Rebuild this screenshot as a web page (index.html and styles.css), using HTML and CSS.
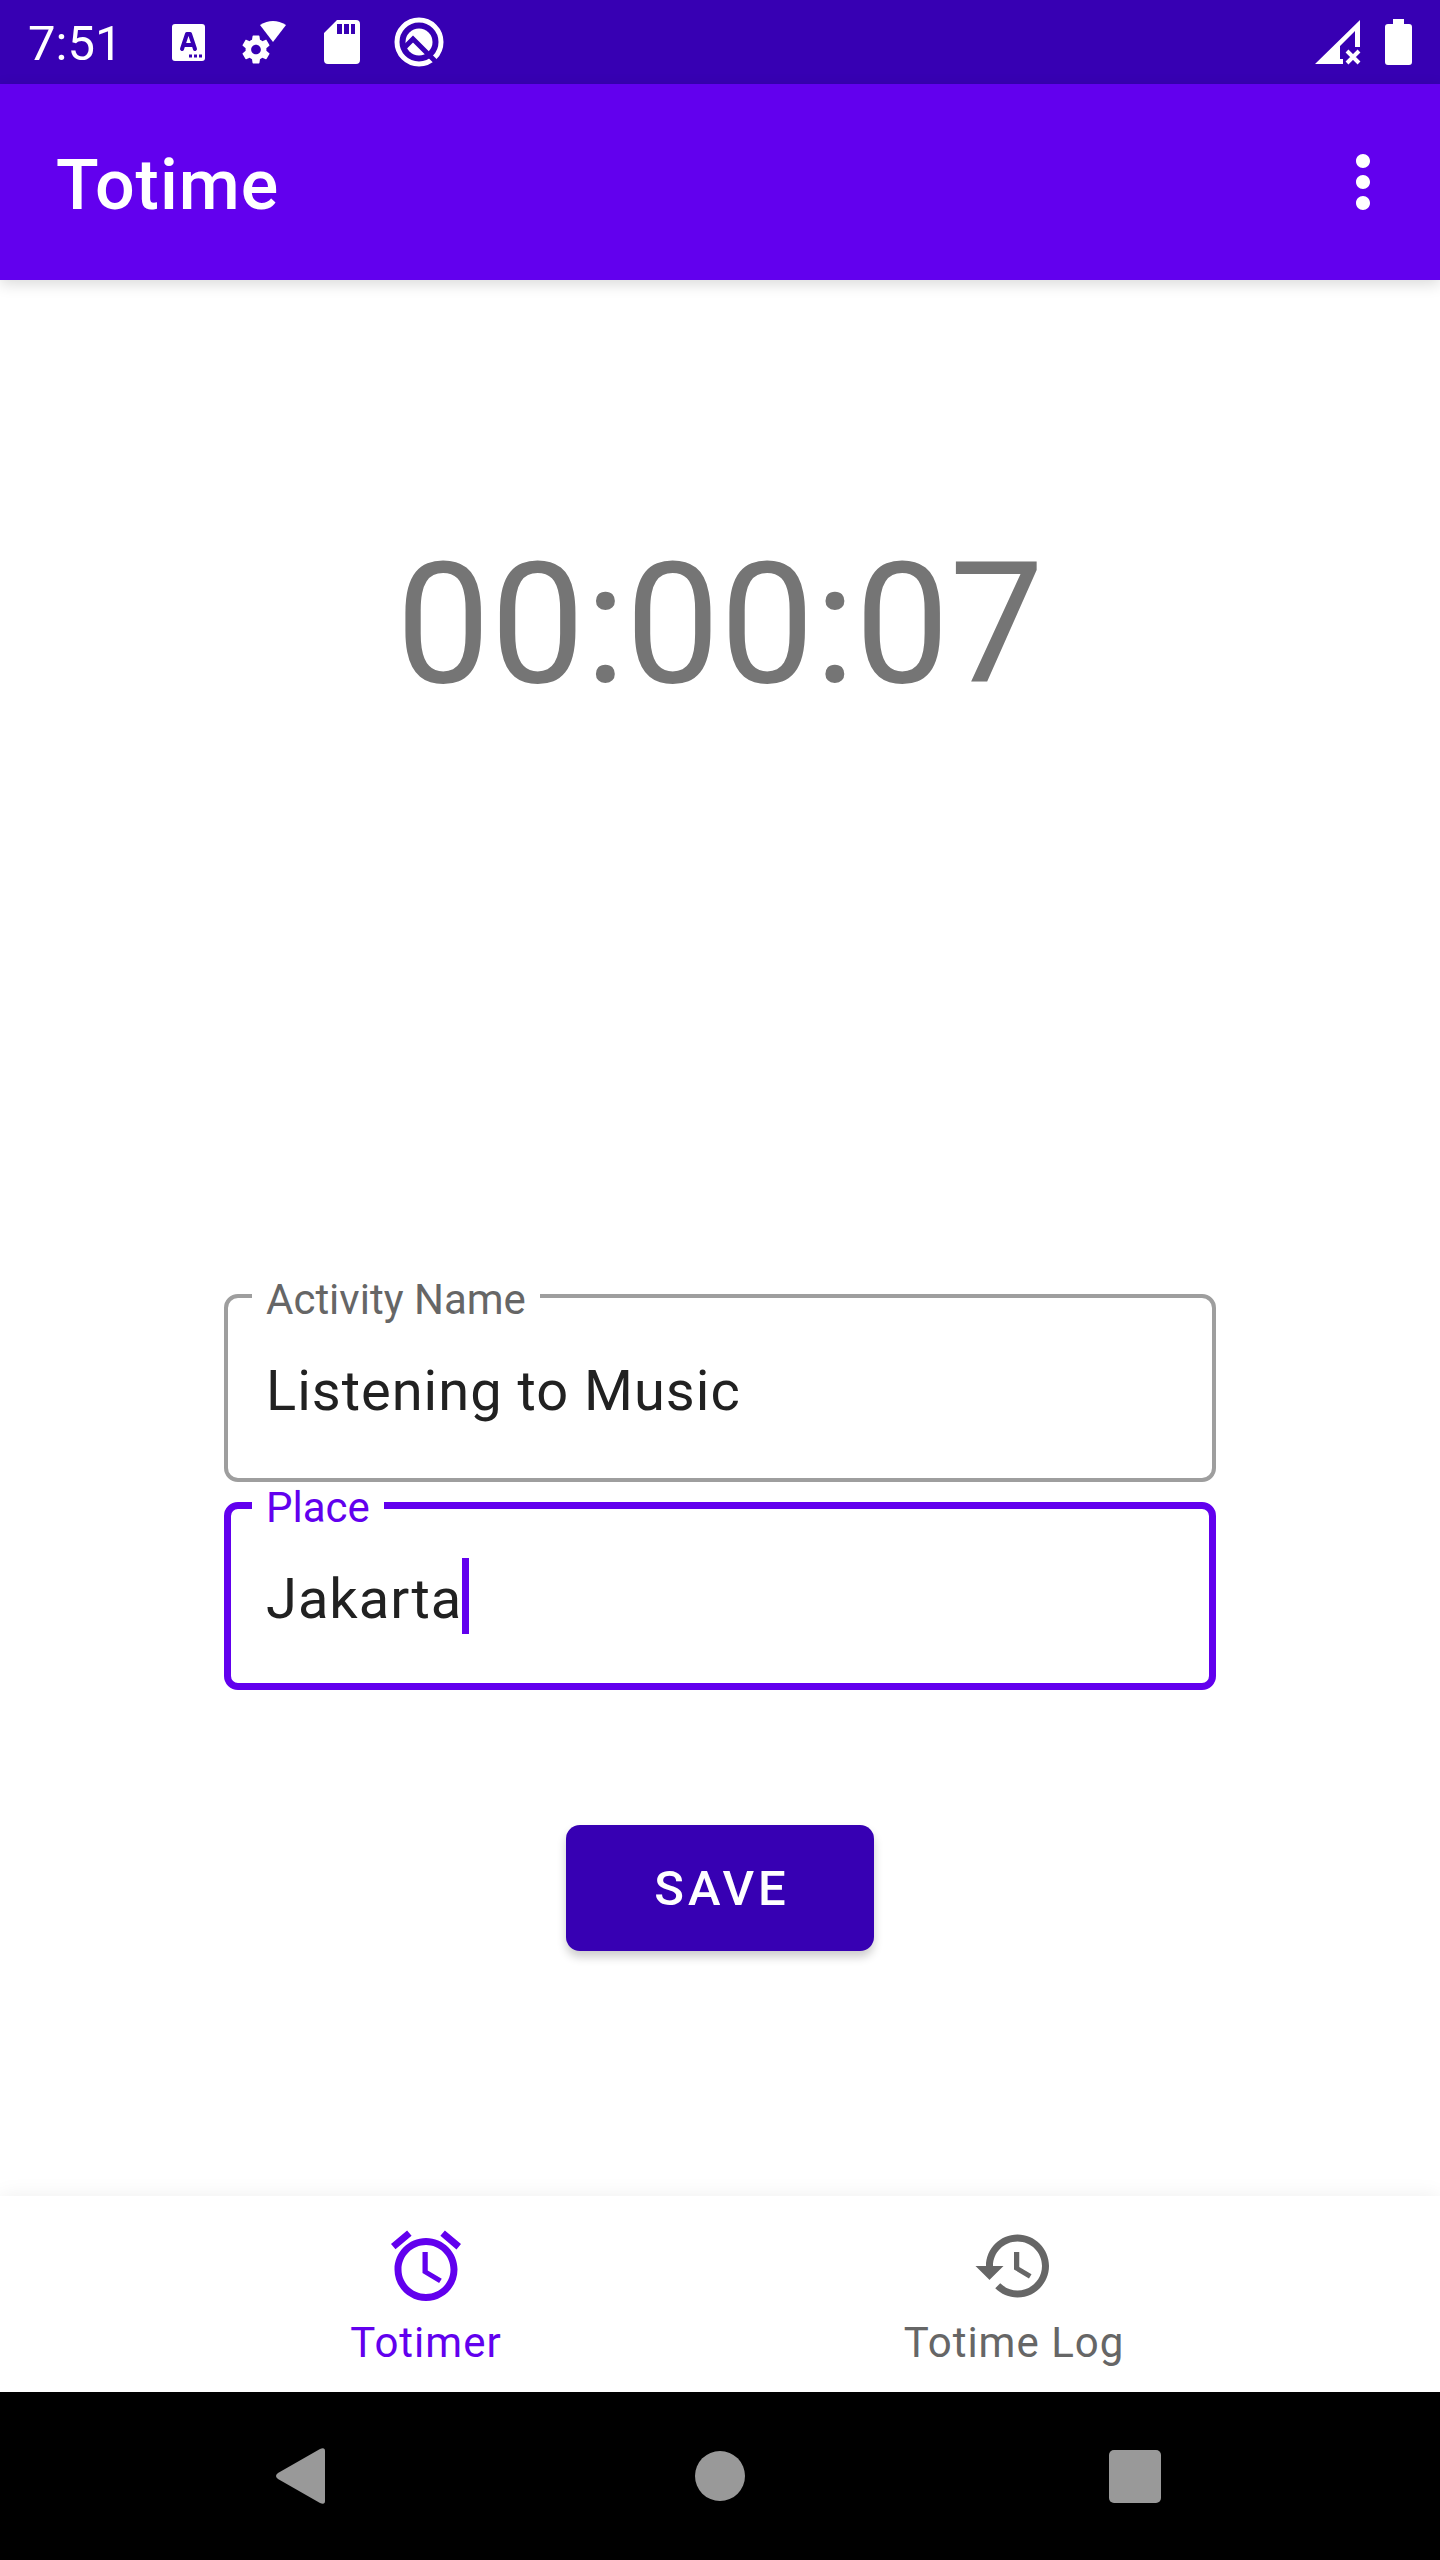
FILE: index.html
```html
<!DOCTYPE html>
<html lang="en">
<head>
<meta charset="utf-8">
<meta name="viewport" content="width=device-width, initial-scale=1">
<title>Totime</title>
<link rel="stylesheet" href="styles.css">
</head>
<body>
<div class="screen">
  <div class="status-bar">
    <span class="clock">7:51</span>
    <div class="notifications">
      <svg class="status-icon" viewBox="0 0 56 56" aria-hidden="true">
        <rect x="12" y="10" width="33" height="37" rx="3" fill="#fff"/>
        <path d="M22 35L27 20H30L35 35M24 31H33" fill="none" stroke="#3700b3" stroke-width="4" stroke-linecap="round" stroke-linejoin="round"/>
        <path d="M29 42h3M34 42h3M39 42h3" stroke="#3700b3" stroke-width="3"/>
      </svg>
      <svg class="status-icon" viewBox="0 0 56 56" aria-hidden="true">
        <path d="M23 11Q36 3 49 11L36 28Z" fill="#fff"/>
        <g transform="translate(19 35.500) scale(1.390) translate(-12 -12)">
          <path fill="#fff" d="M19.430 12.980c.04-.32.07-.64.07-.98s-.03-.66-.07-.98l2.110-1.650c.19-.15.24-.42.12-.64l-2-3.460c-.12-.22-.39-.3-.61-.22l-2.490 1c-.52-.4-1.080-.73-1.690-.98l-.38-2.650C14.460 2.180 14.250 2 14 2h-4c-.25 0-.46.18-.49.42l-.38 2.650c-.61.25-1.170.59-1.690.98l-2.490-1c-.23-.09-.49 0-.61.22l-2 3.460c-.13.22-.07.49.12.64l2.110 1.650c-.04.32-.07.65-.07.98s.03.66.07.98l-2.110 1.650c-.19.15-.24.42-.12.64l2 3.460c.12.22.39.3.61.22l2.490-1c.52.4 1.080.73 1.690.98l.38 2.650c.03.24.24.42.49.42h4c.25 0 .46-.18.49-.42l.38-2.650c.61-.25 1.170-.59 1.690-.98l2.490 1c.23.09.49 0 .61-.22l2-3.460c.12-.22.07-.49-.12-.64l-2.110-1.650zM12 15.500c-1.930 0-3.500-1.570-3.500-3.500s1.570-3.500 3.500-3.500 3.500 1.570 3.500 3.500-1.570 3.500-3.500 3.500z"/>
        </g>
      </svg>
      <svg class="status-icon" viewBox="0 0 56 56" aria-hidden="true">
        <path fill="#fff" fill-rule="evenodd" d="M23 6H42Q46 6 46 10V46Q46 50 42 50H14Q10 50 10 46V19ZM23 10V20H28V10ZM30 10V20H35V10ZM37 10V20H41V10Z"/>
      </svg>
      <svg class="status-icon" viewBox="0 0 56 56" aria-hidden="true">
        <circle cx="28" cy="28" r="22" fill="none" stroke="#fff" stroke-width="5"/>
        <circle cx="28" cy="28" r="13.500" fill="#fff"/>
        <path d="M12 35L22 25L47 50" fill="none" stroke="#3700b3" stroke-width="5"/>
      </svg>
    </div>
    <div class="system-icons">
      <svg class="status-icon" viewBox="0 0 56 56" aria-hidden="true">
        <path fill="#fff" fill-rule="evenodd" d="M1 50L46 6V33H41V17L26 32V45H29V50Z"/>
        <path d="M33 37L45 49M45 37L33 49" stroke="#fff" stroke-width="4"/>
      </svg>
      <svg class="status-icon" viewBox="0 0 56 56" aria-hidden="true">
        <path fill="#fff" d="M23 5H34V10H39Q42 10 42 13V48Q42 51 39 51H18Q15 51 15 48V13Q15 10 18 10H23Z"/>
      </svg>
    </div>
  </div>

  <header class="app-bar">
    <h1 class="app-title">Totime</h1>
    <button class="icon-button" type="button" aria-label="More options">
      <svg class="icon" viewBox="0 0 24 24" aria-hidden="true"><path fill="currentColor" d="M12 8c1.100 0 2-.9 2-2s-.9-2-2-2-2 .9-2 2 .9 2 2 2zm0 2c-1.100 0-2 .9-2 2s.9 2 2 2 2-.9 2-2-.9-2-2-2zm0 6c-1.100 0-2 .9-2 2s.9 2 2 2 2-.9 2-2-.9-2-2-2z"/></svg>
    </button>
  </header>

  <main class="content">
    <p class="timer" role="timer">00:00:07</p>
    <form class="activity-form">
      <fieldset class="field">
        <legend class="field-legend"><label for="activity">Activity Name</label></legend>
        <input class="field-input" id="activity" type="text" value="Listening to Music">
      </fieldset>
      <fieldset class="field field-active">
        <legend class="field-legend"><label for="place">Place</label></legend>
        <input class="field-input field-input-sized" id="place" type="text" value="Jakarta">
        <span class="caret" aria-hidden="true"></span>
      </fieldset>
      <button class="save-button" type="button">SAVE</button>
    </form>
  </main>

  <nav class="tabs">
    <a class="tab tab-active" href="#totimer" aria-current="page">
      <svg class="icon" viewBox="0 0 24 24" aria-hidden="true"><path fill="currentColor" d="M22 5.720l-4.600-3.860-1.290 1.530 4.600 3.860L22 5.720zM7.880 3.390L6.600 1.860 2 5.710l1.290 1.530 4.590-3.850zM12.500 8H11v6l4.750 2.850.75-1.230-4-2.370V8zM12 4c-4.970 0-9 4.030-9 9s4.020 9 9 9c4.970 0 9-4.030 9-9s-4.030-9-9-9zm0 16c-3.870 0-7-3.130-7-7s3.130-7 7-7 7 3.130 7 7-3.130 7-7 7z"/></svg>
      <span>Totimer</span>
    </a>
    <a class="tab" href="#log">
      <svg class="icon" viewBox="0 0 24 24" aria-hidden="true"><path fill="currentColor" d="M13 3c-4.970 0-9 4.030-9 9H1l3.890 3.890.07.14L9 12H6c0-3.870 3.130-7 7-7s7 3.130 7 7-3.130 7-7 7c-1.930 0-3.680-.79-4.940-2.060l-1.420 1.420C8.270 19.990 10.510 21 13 21c4.970 0 9-4.030 9-9s-4.030-9-9-9zm-1 5v5l4.280 2.540.72-1.210-3.500-2.080V8H12z"/></svg>
      <span>Totime Log</span>
    </a>
  </nav>

  <div class="system-nav">
    <button class="system-button" type="button" aria-label="Back">
      <svg class="icon" viewBox="0 0 84 84" aria-hidden="true"><path fill="#999" d="M15 39L57 15Q62 13 62 17V67Q62 71 57 69L15 45Q11 42 15 39Z"/></svg>
    </button>
    <button class="system-button" type="button" aria-label="Home">
      <svg class="icon" viewBox="0 0 84 84" aria-hidden="true"><circle cx="42" cy="42" r="25" fill="#999"/></svg>
    </button>
    <button class="system-button" type="button" aria-label="Recent apps">
      <svg class="icon" viewBox="0 0 84 84" aria-hidden="true"><rect x="16" y="16" width="52" height="53" rx="5" fill="#999"/></svg>
    </button>
  </div>
</div>
</body>
</html>
```
FILE: styles.css
```css
* {
  box-sizing: border-box;
}

body {
  margin: 0;
  background: #fff;
  color: #212121;
  font-family: Roboto, "Liberation Sans", sans-serif;
}

button {
  border: 0;
  padding: 0;
  background: none;
  color: inherit;
  font-family: inherit;
}

.screen {
  display: flex;
  flex-direction: column;
  min-height: 100vh;
}

.icon {
  display: block;
  width: 84px;
  height: 84px;
}

/* Status bar */
.status-bar {
  display: flex;
  align-items: center;
  height: 84px;
  padding: 0 14px 0 28px;
  background: #3700b3;
  color: #fff;
}

.clock {
  padding-top: 4px;
  font-size: 49px;
  line-height: 56px;
}

.notifications {
  display: flex;
  gap: 21px;
  margin-left: 38px;
}

.system-icons {
  display: flex;
  margin-left: auto;
}

.status-icon {
  display: block;
  width: 56px;
  height: 56px;
}

/* App bar */
.app-bar {
  position: relative;
  display: flex;
  align-items: center;
  justify-content: space-between;
  height: 196px;
  padding: 0 35px 0 56px;
  background: #6200ee;
  box-shadow: 0 4px 14px rgba(0, 0, 0, 0.15);
  color: #fff;
}

.app-title {
  margin: 0;
  padding-top: 6px;
  font-size: 70px;
  font-weight: 500;
  line-height: 84px;
  letter-spacing: 1px;
}

/* Timer and form */
.content {
  flex: 1;
  display: flex;
  flex-direction: column;
  align-items: center;
  padding: 243px 56px 240px;
}

.timer {
  margin: 0;
  color: #757575;
  font-size: 168px;
  line-height: 204px;
}

.activity-form {
  display: flex;
  flex-direction: column;
  align-items: center;
  width: 100%;
  max-width: 992px;
  margin-top: 541px;
}

.field {
  display: flex;
  width: 100%;
  min-width: 0;
  margin: 0;
  padding: 26px 34px 52px 38px;
  border: 4px solid #9e9e9e;
  border-radius: 14px;
}

/* The thicker outline grows inwards, so the padding gives way to it. */
.field-active {
  margin: -3px 0 135px;
  padding: 26px 31px 49px 35px;
  border: 7px solid #6200ee;
}

.field-legend {
  margin-left: -14px;
  padding: 8px 14px 0;
  color: #666;
  font-size: 42px;
  line-height: 48px;
}

.field-active .field-legend {
  padding-top: 5px;
  color: #6200ee;
}

.field-input {
  width: 100%;
  min-width: 0;
  height: 76px;
  padding: 6px 0 0;
  border: 0;
  outline: 0;
  background: none;
  color: #212121;
  font-family: inherit;
  font-size: 56px;
  line-height: 70px;
  letter-spacing: 1px;
}

.field-input-sized {
  field-sizing: content;
  width: auto;
}

.caret {
  width: 7px;
  height: 76px;
  background: #6200ee;
}

.save-button {
  min-width: 308px;
  height: 126px;
  padding-left: 4px;
  border-radius: 14px;
  background: #3700b3;
  box-shadow: 0 6px 10px rgba(0, 0, 0, 0.2);
  color: #fff;
  font-size: 49px;
  font-weight: 500;
  letter-spacing: 4px;
}

/* Bottom tabs */
.tabs {
  display: flex;
  justify-content: center;
  height: 196px;
  background: #fff;
  box-shadow: 0 0 20px rgba(0, 0, 0, 0.07);
}

.tab {
  display: flex;
  flex: 0 1 588px;
  flex-direction: column;
  align-items: center;
  gap: 7px;
  padding-top: 28px;
  color: #666;
  font-size: 42px;
  line-height: 56px;
  letter-spacing: 1px;
  text-decoration: none;
}

.tab-active {
  color: #6200ee;
}

/* System navigation */
.system-nav {
  position: relative;
  display: grid;
  grid-template-columns: repeat(3, 1fr);
  place-items: center;
  height: 168px;
  padding: 0 98px;
  background: #000;
}
```
